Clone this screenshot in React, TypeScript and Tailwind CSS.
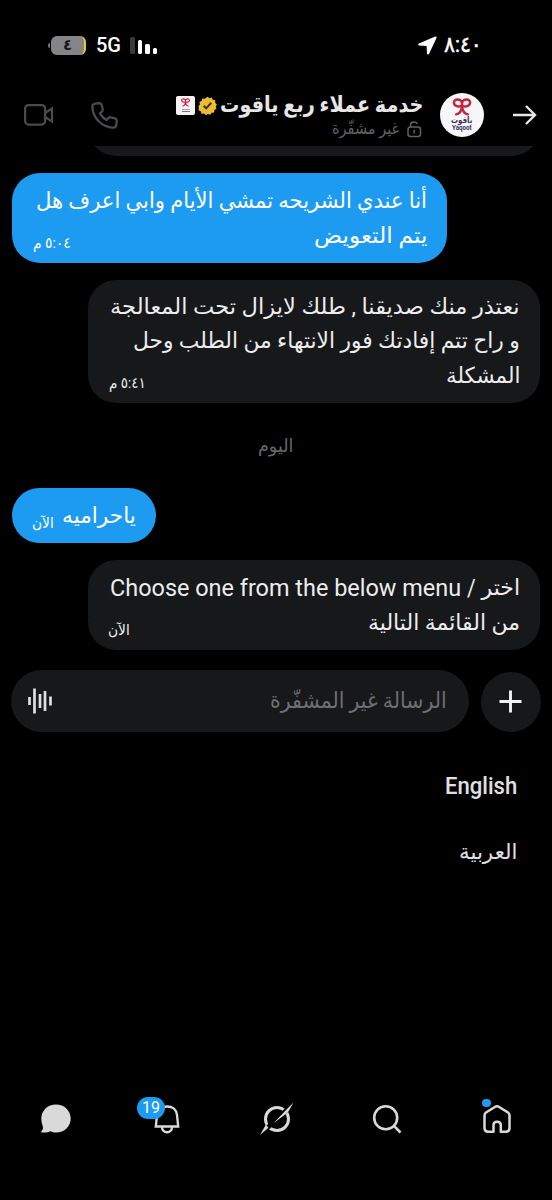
import { useLayoutEffect, useRef, useState } from "react";
import type { ReactNode } from "react";

const FONT = "font-['Roboto','DejaVu_Sans',sans-serif]";

/** One line of text, condensed horizontally so that it fills the given width. */
function Fit({ w, className = "", children, ltr = false }: { w: number; className?: string; children: ReactNode; ltr?: boolean }) {
  const ref = useRef<HTMLSpanElement>(null);
  const [k, setK] = useState(1);
  useLayoutEffect(() => {
    if (ref.current) setK(w / ref.current.offsetWidth);
  }, [w]);
  return (
    <span dir={ltr ? "ltr" : "rtl"} className={`block shrink-0 whitespace-nowrap ${className}`} style={{ width: w }}>
      <span
        ref={ref}
        className={`inline-block ${ltr ? "origin-left" : "origin-right"}`}
        style={{ transform: `scaleX(${k})` }}
      >
        {children}
      </span>
    </span>
  );
}

function Bow({ className }: { className: string }) {
  return (
    <svg viewBox="0 0 20 19" className={className} fill="none" stroke="#c8233f" strokeWidth="2.6" strokeLinecap="round" strokeLinejoin="round">
      <path d="M10 4.500C8.500.800 1.500.400 1.500 4.800C1.500 9.500 8 9.500 10 8C12 9.500 18.500 9.500 18.500 4.800C18.500.400 11.500.800 10 4.500Z" />
      <path d="M10 4.500V9C9.500 13 8 16.800 3.800 17.300M10 9C10.500 13 12 16.800 16.200 17.300" />
    </svg>
  );
}

function StatusBar() {
  return (
    <div className="flex h-[90px] items-center justify-between pr-[70px] pl-[48px] text-white">
      <div className="flex items-center">
        <span className="h-[5px] w-[2px] rounded-l bg-[#747476]" />
        <span className="ml-px flex h-[19px] w-[35px] items-center justify-center rounded-[6px] border-r-2 border-[#e5cb2e] bg-[#858587] text-[15px] leading-none font-bold text-[#161616]">
          ٤
        </span>
        <Fit w={25} ltr className="ml-[10px] text-[20px] leading-none font-medium">5G</Fit>
        <span className="ml-[9px] flex h-[17px] items-end gap-[3px]">
          <i className="h-[17px] w-[4.500px] rounded-[1.500px] bg-[#39393b]" />
          <i className="h-[13.500px] w-[4.500px] rounded-[1.500px] bg-white" />
          <i className="h-[10px] w-[4.500px] rounded-[1.500px] bg-white" />
          <i className="h-[6px] w-[4.500px] rounded-[1.500px] bg-white" />
        </span>
      </div>
      <div className="flex items-center gap-[7px]">
        <svg viewBox="0 0 19 19" className="size-[19px]" fill="white">
          <path d="M17.200.600.900 7.600C-.3 8.200-.1 9.500 1.200 9.600L8.600 9.900 9 17.500C9.100 18.800 10.500 19 11.100 17.800L18.500 1.900C18.900.9 18.200.2 17.200.6Z" />
        </svg>
        <Fit w={38} ltr className="text-[22px] leading-none font-normal [-webkit-text-stroke:0.5px_white]">٨:٤٠</Fit>
      </div>
    </div>
  );
}

function Header() {
  return (
    <header className="flex h-[56px] items-start pt-[3px] pr-[15px] pl-[24px]">
      <svg viewBox="0 0 30 24" className="mt-[10px] h-[24px] w-[30px]" fill="none" stroke="#4b4b4e" strokeWidth="2.200">
        <rect x="1.100" y="2.100" width="20" height="19.500" rx="3.500" />
        <path d="M21 10 28 5.500V18.500L21 14" />
      </svg>
      <svg viewBox="0 0 26 26" className="mt-[9px] ml-[37px] size-[27px]" fill="none" stroke="#4b4b4e" strokeWidth="2.200" strokeLinejoin="round">
        <path d="M4.200 1.600 8 1.200C9.300 1.100 10 1.800 10.300 2.900L11.300 7C11.500 8.200 11.200 8.900 10.300 9.600L8.600 10.900C10.100 13.900 12 15.900 15.100 17.400L16.400 15.700C17.100 14.800 17.900 14.500 19 14.800L23.100 15.800C24.200 16.100 24.900 16.800 24.800 18.100L24.400 21.800C24.200 23.600 23.100 24.800 21.300 24.700C10.500 24.200 1.700 15.500 1.300 4.700C1.200 2.900 2.400 1.800 4.200 1.600Z" />
      </svg>
      <div className="ml-auto flex flex-col items-end">
        <div className="flex h-[24px] items-center">
          <span className="flex size-[19px] flex-col items-center rounded-[2px] bg-[#f4f2f3] pt-[2.500px]">
            <Bow className="size-[9px]" />
            <i className="mt-[1.500px] h-px w-[8px] bg-[#aaa3b5]" />
            <i className="mt-px h-px w-[8px] bg-[#777087]" />
          </span>
          <svg viewBox="0 0 22 22" className="ml-[3px] size-[19px]">
            <path fill="#e8bd35" d="m11 .8 2.200 1.800 2.700-.8 1.300 2.500 2.800.5-.1 2.900 2 2-1.400 2.400.9 2.700-2.400 1.500-.3 2.800-2.900.3-1.600 2.300-2.700-1-2.400 1.500-2.200-1.900-2.900.2-.8-2.700-2.600-1.200.5-2.800L.5 12l1.700-2.300-.5-2.800 2.500-1.300.7-2.700 2.900.2Z" />
            <path d="m6.500 11.300 3 3 5.800-6.500" fill="none" stroke="#403619" strokeWidth="2.400" />
          </svg>
          <Fit w={203} className="ml-[3px] text-[22px] leading-[26px] font-bold text-[#e7e7e8]">خدمة عملاء ربع ياقوت</Fit>
        </div>
        <div className="mt-px flex h-[22px] items-center gap-[8px]">
          <Fit w={67} className="text-[16px] leading-[22px] text-[#606164]">غير مشفّرة</Fit>
          <svg viewBox="0 0 15 17" className="mr-px h-[17px] w-[15px]" fill="none" stroke="#606164" strokeWidth="1.500">
            <rect x="1" y="6" width="12.500" height="9.500" rx="2.500" />
            <path d="M3.500 6V4C3.500.2 9.500.1 10.500 3M7.200 9V12.500" />
          </svg>
        </div>
      </div>
      <div className="ml-[17px] flex size-[44px] flex-col items-center rounded-full bg-[#f7f6f8] pt-[5px]">
        <Bow className="h-[18px] w-[20px]" />
        <Fit w={21} className="h-[8px] text-[9px] leading-[8px] font-bold text-[#3b315b]">ياقوت</Fit>
        <Fit w={20} ltr className="h-[8px] text-[7.500px] leading-[8px] font-bold text-[#3b315b]">Yaqoot</Fit>
      </div>
      <svg viewBox="0 0 24 22" className="mt-[11px] ml-[29px] h-[22px] w-[24px]" fill="none" stroke="#e7e7e8" strokeWidth="2.400">
        <path d="M0 11H22M13 2 22 11 13 20" />
      </svg>
    </header>
  );
}

const line = "h-[34.400px] text-[22px] leading-[34.400px]";
const latin = "h-[34.400px] text-[23.500px] leading-[34.400px]";
const stamp = "text-[15px] leading-[20px]";

function Messages() {
  return (
    <main className="flex flex-col px-[12px]">
      <div className="ml-[76px] h-[10px] overflow-hidden">
        <div className="mt-[-50px] h-[60px] w-[452px] rounded-[28px] bg-[#16181a]" />
      </div>
      <div className="mt-[17px] flex h-[90px] w-[435px] flex-col items-end justify-end rounded-[28px] bg-[#1d9bf0] pr-[20px] pb-[10px] pl-[21px] text-white">
        <Fit w={391} className={line}>أنا عندي الشريحه تمشي الأيام وابي اعرف هل</Fit>
        <div className="flex w-full items-end justify-between">
          <Fit w={38} className={stamp}>٥:٠٤ م</Fit>
          <Fit w={113} className={line}>يتم التعويض</Fit>
        </div>
      </div>
      <div className="mt-[17px] ml-auto flex h-[123px] w-[452px] flex-col items-end justify-end rounded-[28px] bg-[#16181a] pr-[20px] pb-[10px] pl-[21px] text-[#ededee]">
        <Fit w={410} className={line}>نعتذر منك صديقنا , طلك لايزال تحت المعالجة</Fit>
        <Fit w={387} className={line}>و راح تتم إفادتك فور الانتهاء من الطلب وحل</Fit>
        <div className="flex w-full items-end justify-between">
          <Fit w={37} className={stamp}>٥:٤١ م</Fit>
          <Fit w={74} className={line}>المشكلة</Fit>
        </div>
      </div>
      <div className="flex h-[85px] items-center justify-center">
        <Fit w={35} className="text-[18px] leading-[24px] text-[#67686b]">اليوم</Fit>
      </div>
      <div className="flex h-[55px] w-[144px] items-end justify-between rounded-[28px] bg-[#1d9bf0] pr-[20px] pb-[10px] pl-[20px] text-white">
        <Fit w={22} className={stamp}>الآن</Fit>
        <Fit w={74} className={line}>ياحراميه</Fit>
      </div>
      <div className="mt-[17px] ml-auto flex h-[90px] w-[452px] flex-col items-end justify-end rounded-[28px] bg-[#16181a] pr-[20px] pb-[10px] pl-[20px] text-[#ededee]">
        <div className="flex">
          <Fit w={351} ltr className={latin}>Choose one from the below menu</Fit>
          <Fit w={9} ltr className={`${latin} ml-[6px]`}>/</Fit>
          <Fit w={39} className={`${line} ml-[5px]`}>اختر</Fit>
        </div>
        <div className="flex w-full items-end justify-between">
          <Fit w={22} className={stamp}>الآن</Fit>
          <Fit w={152} className={line}>من القائمة التالية</Fit>
        </div>
      </div>
    </main>
  );
}

function Composer() {
  return (
    <div className="mt-[19.500px] flex items-end justify-between px-[11px]">
      <div className="flex h-[62px] w-[458px] items-center justify-between rounded-full bg-[#16181a] pr-[22px] pl-[17px]">
        <svg viewBox="0 0 26 28" className="mt-px h-[28px] w-[26px]" stroke="#dedfe0" strokeWidth="2.700">
          <path d="M1.500 10V18M6.500 1.500V26.500M12 7V21M17 4V24M22.500 9.500V18.500" />
        </svg>
        <Fit w={177} className="text-[22px] leading-[34px] text-[#6d6f73]">الرسالة غير المشفّرة</Fit>
      </div>
      <div className="flex size-[60px] items-center justify-center rounded-full bg-[#16181a]">
        <svg viewBox="0 0 24 24" className="mr-px size-[23px]" stroke="#f3f3f3" strokeWidth="3">
          <path d="M12 .500V23.500M.500 12H23.500" />
        </svg>
      </div>
    </div>
  );
}

function TabBar() {
  return (
    <nav className="mt-auto flex h-[120px] items-start pl-[41px]">
      <svg viewBox="0 0 30 30" className="mt-[24px] size-[30px]" fill="#d9d9da">
        <path d="M15 .500C23.300.500 29.700 6.700 29.700 14.500C29.700 22.500 23.300 28.600 15.200 28.600C12.800 28.600 11.300 28 9.800 27.300C7 28.600 3.500 28.800.800 28.500C-.1 28.300 0 27.500.600 26.900C2.100 25.500 2.300 24 1.500 21.500C.7 19.400.300 17.100.300 14.500C.300 6.700 6.700.500 15 .500Z" />
      </svg>
      <div className="relative mt-[24px] ml-[81px] size-[30px]">
        <svg viewBox="0 0 30 30" className="size-[30px]" fill="none" stroke="#d9d9da" strokeWidth="2.400">
          <path d="M3.800 22.500 5 11C5.500 5.500 9.500 2.500 15 2.500C20.500 2.500 24.500 5.500 25 11L26.200 22.500ZM10 23C10 30 20 30 20 23" />
        </svg>
        <span className="absolute top-[-7px] left-[-15px] flex h-[22px] w-[28px] items-center justify-center rounded-full bg-[#1d9bf0] text-[16px] leading-none text-white">
          19
        </span>
      </div>
      <svg viewBox="0 0 36 34" className="mt-[22px] ml-[77px] h-[34px] w-[36px]">
        <circle cx="18" cy="17" r="11.500" fill="none" stroke="#d9d9da" strokeWidth="3" />
        <path d="M4 30 32 4" stroke="black" strokeWidth="4.500" />
        <path fill="#d9d9da" d="M34.500.500 30.200 8.200C29 10.300 27.500 11.500 25.500 13L14.500 21.200 27 8ZM1 33 6.800 22.800 9.500 25.800Z" />
      </svg>
      <svg viewBox="0 0 30 30" className="mt-[24px] ml-[77px] size-[30px]" fill="none" stroke="#d9d9da" strokeWidth="2.600">
        <circle cx="13.700" cy="13.700" r="11.500" />
        <path d="m21.900 21.900 6.600 6.600" />
      </svg>
      <div className="relative mt-[24px] ml-[80px] size-[30px]">
        <svg viewBox="0 0 30 30" className="size-[30px]" fill="none" stroke="#d9d9da" strokeWidth="2.500" strokeLinejoin="round">
          <path d="M11.500 27.700H6C3.500 27.700 2.500 26 2.500 24V11.500C2.500 10 3 9.200 4 8.500L13.300 2.700C14.500 2 15.500 2 16.700 2.700L26 8.500C27 9.200 27.500 10 27.500 11.500V24C27.500 26 26.500 27.700 24 27.700H18.800V21C18.800 16.500 11.500 16.500 11.500 21Z" />
        </svg>
        <i className="absolute top-[-5.500px] left-0 size-[8.500px] rounded-full bg-[#1d9bf0]" />
      </div>
    </nav>
  );
}

export default function App() {
  return (
    <div className={`flex h-[1200px] w-[552px] flex-col overflow-hidden bg-black ${FONT}`}>
      <StatusBar />
      <Header />
      <Messages />
      <Composer />
      <div className="mt-[38.500px] flex flex-col items-end gap-[31px] pr-[35px] text-[#e0e0e1]">
        <Fit w={72} ltr className="h-[34px] text-[23px] leading-[34px] font-medium">English</Fit>
        <Fit w={58} className="h-[34px] text-[21px] leading-[34px] font-medium">العربية</Fit>
      </div>
      <TabBar />
    </div>
  );
}
